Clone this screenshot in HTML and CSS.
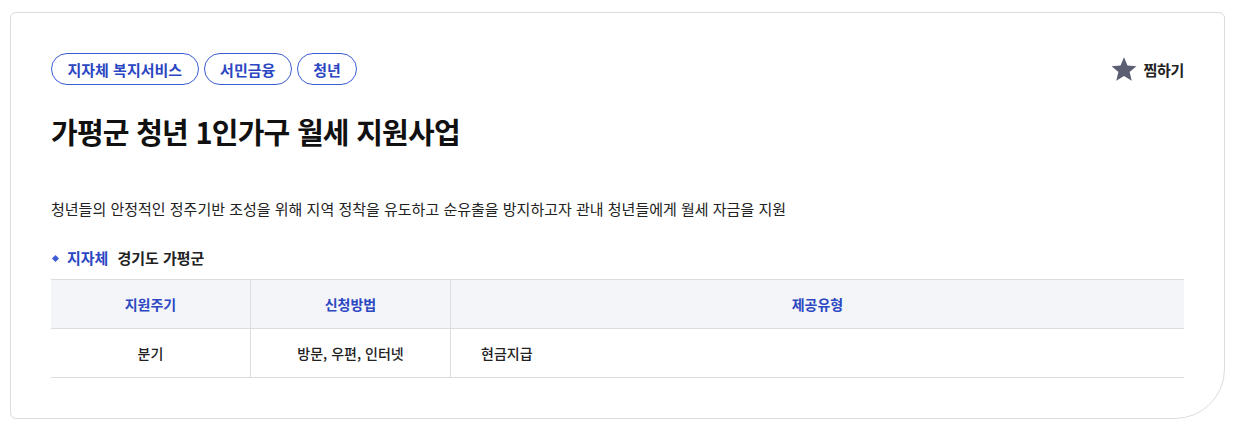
FILE: index.html
```html
<!DOCTYPE html>
<html lang="ko">
<head>
<meta charset="utf-8">
<link rel="stylesheet" href="styles.css">
</head>
<body>
<div class="card">
  <div class="top">
    <div class="tags">
      <span class="tag">지자체 복지서비스</span>
      <span class="tag">서민금융</span>
      <span class="tag">청년</span>
    </div>
    <button class="bookmark">
      <svg width="28" height="27" viewBox="0 0 24 24"><path d="M12 1.2l3.1 7.3 7.9.6-6 5.2 1.9 7.7L12 17.8 5.1 22l1.9-7.7-6-5.2 7.9-.6z" fill="#5c5e74"/></svg>
      <span>찜하기</span>
    </button>
  </div>
  <h1 class="title">가평군 청년 1인가구 월세 지원사업</h1>
  <p class="desc">청년들의 안정적인 정주기반 조성을 위해 지역 정착을 유도하고 순유출을 방지하고자 관내 청년들에게 월세 자금을 지원</p>
  <div class="org"><span class="dot"></span><span class="org-label">지자체</span><span class="org-name">경기도 가평군</span></div>
  <div class="table">
    <div class="th">지원주기</div>
    <div class="th">신청방법</div>
    <div class="th">제공유형</div>
    <div class="td">분기</div>
    <div class="td">방문, 우편, 인터넷</div>
    <div class="td left">현금지급</div>
  </div>
</div>
</body>
</html>
```
FILE: styles.css
```css
* { box-sizing: border-box; }
html, body { margin: 0; padding: 0; background: #fff; }
body {
  font-family: "Noto Sans CJK KR", "Noto Sans", sans-serif;
  color: #1a1a1a;
  padding: 12px 15px 11px 10px;
}
.card {
  border: 1px solid #dcdcdc;
  border-radius: 6px 6px 50px 6px;
  padding: 40px 40px 40px 40px;
  height: 407px;
}
.top {
  display: flex;
  justify-content: space-between;
  align-items: center;
}
.tags { display: flex; gap: 5px; }
.tag {
  display: inline-flex;
  align-items: center;
  height: 32px;
  padding: 0 15.5px;
  border: 1px solid #3d5cd6;
  border-radius: 16px;
  color: #2b47c2;
  font-size: 15px;
  font-weight: 700;
}
.bookmark {
  display: flex;
  align-items: center;
  gap: 5px;
  background: none;
  border: 0;
  padding: 0;
  font-family: inherit;
  font-size: 15px;
  font-weight: 700;
  color: #222;
  letter-spacing: -0.3px;
}
.title {
  margin: 26px 0 0;
  font-size: 29px;
  font-weight: 700;
  letter-spacing: -0.75px;
  color: #111;
  line-height: 40px;
}
.desc {
  margin: 47px 0 0;
  font-size: 15px;
  line-height: 22px;
  color: #222;
}
.org {
  margin-top: 27px;
  display: flex;
  align-items: center;
  font-size: 15px;
  font-weight: 700;
  line-height: 22px;
}
.dot {
  width: 5px; height: 5px;
  background: #3d5cd6;
  transform: rotate(45deg);
  margin: 0 9px 0 2px;
}
.org-label { color: #2b47c2; margin-right: 9px; }
.org-name { color: #222; }
.table {
  margin-top: 10px;
  display: grid;
  grid-template-columns: 199px 200px 1fr;
  border-top: 1px solid #dcdcdc;
}
.th, .td {
  height: 49px;
  display: flex;
  align-items: center;
  justify-content: center;
  border-bottom: 1px solid #dcdcdc;
  border-left: 1px solid #dcdcdc;
  font-size: 14px;
}
.th:nth-child(3n+1), .td:nth-child(3n+1) { border-left: 0; }
.th {
  background: #f4f5f9;
  color: #2b47c2;
  font-weight: 700;
}
.td { color: #222; font-weight: 500; }
.td.left { justify-content: flex-start; padding-left: 30px; }
```
